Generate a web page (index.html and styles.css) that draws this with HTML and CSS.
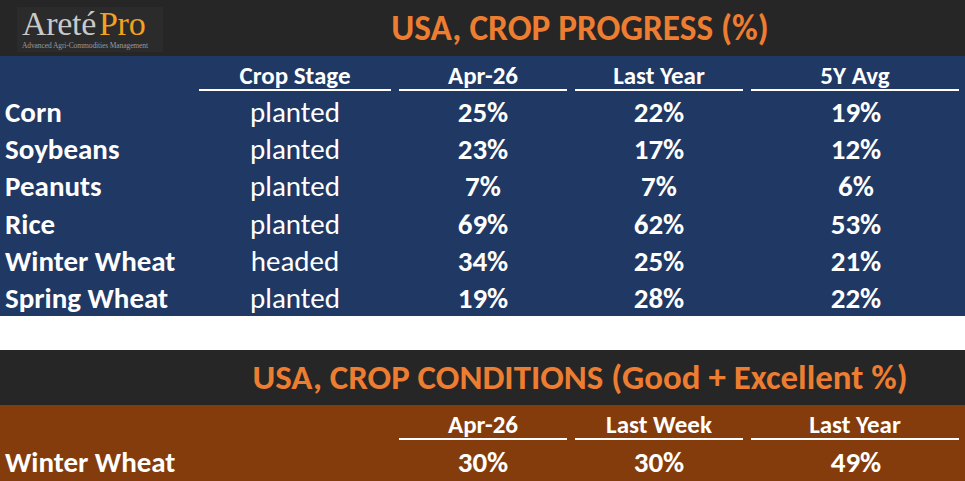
FILE: index.html
```html
<!DOCTYPE html>
<html>
<head>
<meta charset="utf-8">
<link rel="stylesheet" href="styles.css">
</head>
<body>
<div class="page">
  <section class="progress">
    <div class="titlebar">
      <div class="logo-cell">
        <div class="logo">
          <div class="logo-name"><span class="arete">Areté</span><span class="pro">Pro</span></div>
          <div class="logo-sub">Advanced Agri-Commodities Management</div>
        </div>
      </div>
      <div class="title">USA, CROP PROGRESS (%)</div>
    </div>
    <div class="table blue">
      <div class="row head">
        <div class="label"></div>
        <div class="hcell"><span>Crop Stage</span></div>
        <div class="hcell"><span>Apr-26</span></div>
        <div class="hcell"><span>Last Year</span></div>
        <div class="hcell last"><span>5Y Avg</span></div>
      </div>
      <div class="row"><div class="label">Corn</div><div class="stage">planted</div><div class="val">25%</div><div class="val">22%</div><div class="val">19%</div></div>
      <div class="row"><div class="label">Soybeans</div><div class="stage">planted</div><div class="val">23%</div><div class="val">17%</div><div class="val">12%</div></div>
      <div class="row"><div class="label">Peanuts</div><div class="stage">planted</div><div class="val">7%</div><div class="val">7%</div><div class="val">6%</div></div>
      <div class="row"><div class="label">Rice</div><div class="stage">planted</div><div class="val">69%</div><div class="val">62%</div><div class="val">53%</div></div>
      <div class="row"><div class="label">Winter Wheat</div><div class="stage">headed</div><div class="val">34%</div><div class="val">25%</div><div class="val">21%</div></div>
      <div class="row"><div class="label">Spring Wheat</div><div class="stage">planted</div><div class="val">19%</div><div class="val">28%</div><div class="val">22%</div></div>
    </div>
  </section>

  <section class="conditions">
    <div class="titlebar cond-title">
      <div class="logo-cell"></div>
      <div class="title">USA, CROP CONDITIONS (Good + Excellent %)</div>
    </div>
    <div class="table brown">
      <div class="row head">
        <div class="label"></div>
        <div class="spacer"></div>
        <div class="hcell"><span>Apr-26</span></div>
        <div class="hcell"><span>Last Week</span></div>
        <div class="hcell last"><span>Last Year</span></div>
      </div>
      <div class="row"><div class="label">Winter Wheat</div><div class="spacer"></div><div class="val">30%</div><div class="val">30%</div><div class="val">49%</div></div>
    </div>
  </section>
</div>
</body>
</html>
```

FILE: styles.css
```css
* { box-sizing: border-box; }
html, body {
  margin: 0;
  padding: 0;
  background: #ffffff;
}
.page {
  width: 965px;
  height: 481px;
  overflow: hidden;
  font-family: "Carlito", "Open Sans", "Liberation Sans", sans-serif;
  color: #ffffff;
}
.titlebar {
  display: grid;
  grid-template-columns: 195px 1fr;
  align-items: center;
  background: #262626;
  height: 56px;
}
.cond-title { height: 55px; }
.title {
  text-align: center;
  color: #ED7D31;
  font-weight: 700;
  font-size: 35.3px;
  line-height: 1;
}
.cond-title .title { font-size: 34.9px; }
.logo-cell {
  height: 100%;
  display: flex;
  align-items: flex-start;
  padding: 7px 0 0 17px;
}
.logo {
  width: 146px;
  height: 45px;
  background: #2b2b2b;
  display: flex;
  flex-direction: column;
  padding: 0 0 0 5px;
}
.logo-name {
  font-family: "Liberation Serif", "DejaVu Serif", serif;
  font-size: 34px;
  line-height: 34px;
  height: 35px;
  letter-spacing: -0.3px;
  white-space: nowrap;
}
.arete { color: #c9c9c9; }
.pro { color: #F3A21F; margin-left: 3px; }
.logo-sub {
  font-family: "Liberation Serif", serif;
  font-size: 7.5px;
  color: #9a9a9a;
  line-height: 8px;
  white-space: nowrap;
  letter-spacing: -0.1px;
}
.table { width: 965px; }
.blue { background: #203864; height: 260px; }
.brown { background: #843C0C; height: 76px; }
.conditions { margin-top: 34px; }
.row {
  display: grid;
  grid-template-columns: 195px 200px 176px 176px 1fr;
  height: 37.2px;
  align-items: center;
}
.row.head { height: 38px; }
.brown .row { height: 38px; }
.label {
  font-weight: 700;
  font-size: 29px;
  line-height: 1;
  padding-left: 5px;
  white-space: nowrap;
}
.stage {
  text-align: center;
  font-size: 29px;
  line-height: 1;
}
.val {
  text-align: center;
  font-weight: 700;
  font-size: 29px;
  line-height: 1;
}
.hcell {
  align-self: end;
  padding: 0 4px 3px 4px;
}
.hcell span {
  display: block;
  text-align: center;
  font-weight: 700;
  font-size: 25px;
  line-height: 26px;
  border-bottom: 2px solid #ffffff;
}
.hcell.last { padding-right: 6px; }
```
